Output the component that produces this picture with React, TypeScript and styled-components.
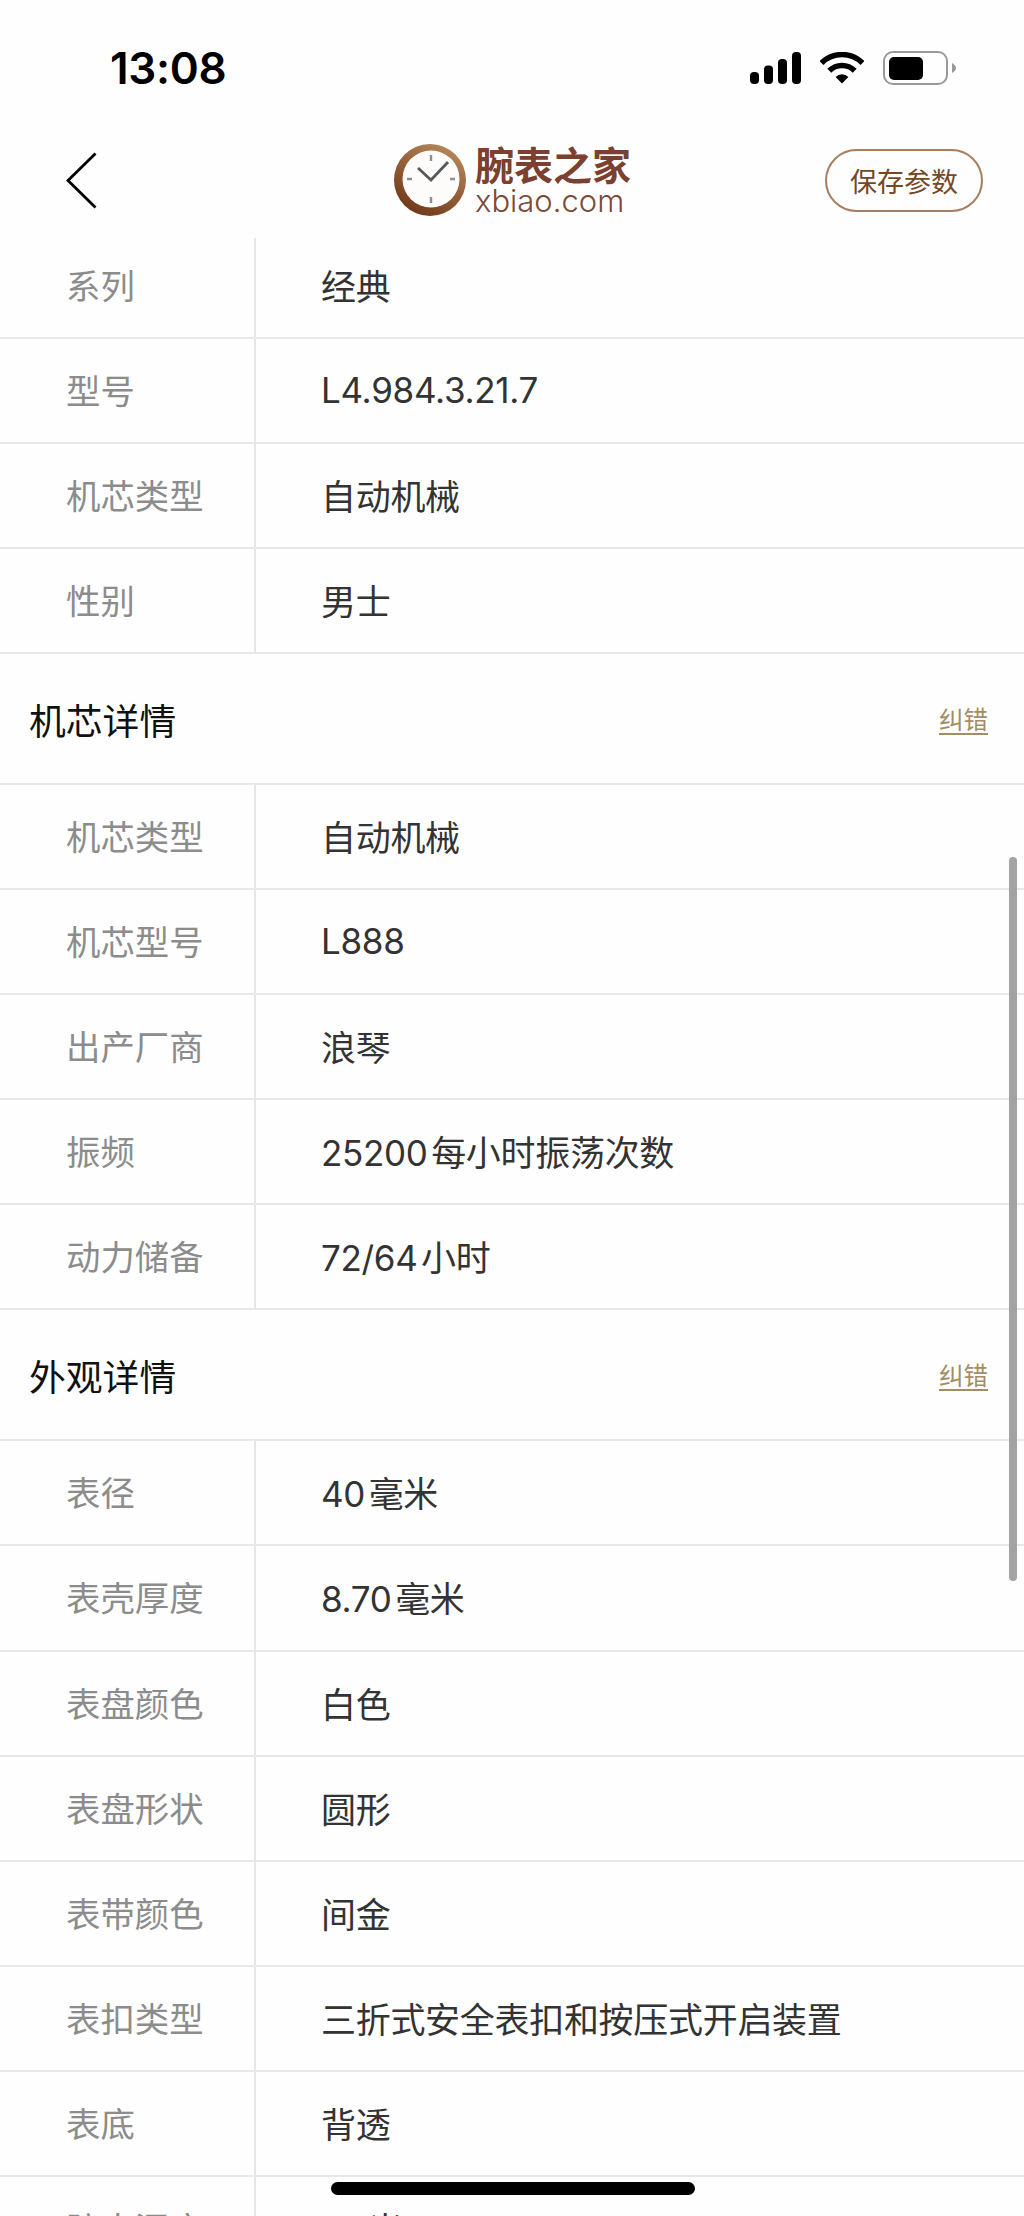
import styled, { createGlobalStyle } from "styled-components";

const GlobalStyle = createGlobalStyle`
  html, body {
    margin: 0;
    padding: 0;
    background: #fefefe;
  }
`;

type Spec = { label: string; value: string };

const basicSpecs: Spec[] = [
  { label: "系列", value: "经典" },
  { label: "型号", value: "L4.984.3.21.7" },
  { label: "机芯类型", value: "自动机械" },
  { label: "性别", value: "男士" },
];

const movementSpecs: Spec[] = [
  { label: "机芯类型", value: "自动机械" },
  { label: "机芯型号", value: "L888" },
  { label: "出产厂商", value: "浪琴" },
  { label: "振频", value: "25200 每小时振荡次数" },
  { label: "动力储备", value: "72/64 小时" },
];

const lookSpecs: Spec[] = [
  { label: "表径", value: "40 毫米" },
  { label: "表壳厚度", value: "8.70 毫米" },
  { label: "表盘颜色", value: "白色" },
  { label: "表盘形状", value: "圆形" },
  { label: "表带颜色", value: "间金" },
  { label: "表扣类型", value: "三折式安全表扣和按压式开启装置" },
  { label: "表底", value: "背透" },
  { label: "防水深度", value: "30 米" },
];

function SpecRows({ specs }: { specs: Spec[] }) {
  return (
    <>
      {specs.map((spec) => (
        <Row key={spec.label}>
          <Label>{spec.label}</Label>
          <Value>{spec.value}</Value>
        </Row>
      ))}
    </>
  );
}

function ClockLogo() {
  return (
    <svg width="72" height="72" viewBox="0 0 72 72">
      <defs>
        <linearGradient id="ring" x1="0.8" y1="0" x2="0.2" y2="1">
          <stop offset="0" stopColor="#b98a5e" />
          <stop offset="0.55" stopColor="#8f5a34" />
          <stop offset="1" stopColor="#6b3418" />
        </linearGradient>
      </defs>
      <circle cx="36" cy="36" r="36" fill="url(#ring)" />
      <circle cx="37" cy="35" r="28.5" fill="#fdfcfa" />
      <path d="M37 11v6M37 53v6M13 35h5M56 35h5" stroke="#8b8f92" strokeWidth="2.4" />
      <path d="M24 24l13 12 17-18" fill="none" stroke="#55595c" strokeWidth="2.8" />
    </svg>
  );
}

export default function App() {
  return (
    <Page>
      <GlobalStyle />
      <StatusBar>
        <Time>13:08</Time>
        <StatusIcons>
          <svg width="51" height="32" viewBox="0 0 51 32" fill="#000">
            <rect x="0" y="20" width="9" height="12" rx="4" />
            <rect x="14" y="13.5" width="9" height="18.5" rx="4" />
            <rect x="28" y="7" width="9" height="25" rx="4" />
            <rect x="42" y="0" width="9" height="32" rx="4" />
          </svg>
          <svg width="44" height="32" viewBox="0 0 44 32">
            <path
              d="M1.5 11A29 29 0 0 1 42.5 11M9.3 18.8A18 18 0 0 1 34.7 18.8"
              fill="none"
              stroke="#000"
              strokeWidth="5.5"
            />
            <path d="M22 31.5L15.6 25A9 9 0 0 1 28.4 25Z" fill="#000" />
          </svg>
          <svg width="73" height="34" viewBox="0 0 73 34">
            <rect x="1" y="1" width="63" height="32" rx="9" fill="none" stroke="#999" strokeWidth="2" />
            <rect x="6" y="6" width="34" height="23" rx="5" fill="#000" />
            <path d="M69 12c2 1 4 3 4 5s-2 4-4 5z" fill="#999" />
          </svg>
        </StatusIcons>
      </StatusBar>

      <NavBar>
        <BackButton>
          <svg width="31" height="57" viewBox="0 0 31 57">
            <path d="M29.5 1.5L2 28.5l27.5 27" fill="none" stroke="#000" strokeWidth="2.8" />
          </svg>
        </BackButton>
        <Logo>
          <ClockLogo />
          <LogoText>
            <LogoName>腕表之家</LogoName>
            <LogoUrl>xbiao.com</LogoUrl>
          </LogoText>
        </Logo>
        <SaveButton>保存参数</SaveButton>
      </NavBar>

      <ScrollArea>
        <ScrollContent>
          <SpecRows specs={basicSpecs} />
          <SectionHead>
            <SectionTitle>机芯详情</SectionTitle>
            <FixLink>纠错</FixLink>
          </SectionHead>
          <SpecRows specs={movementSpecs} />
          <SectionHead>
            <SectionTitle>外观详情</SectionTitle>
            <FixLink>纠错</FixLink>
          </SectionHead>
          <SpecRows specs={lookSpecs} />
        </ScrollContent>
      </ScrollArea>

      <ScrollThumb />
      <HomeIndicator />
    </Page>
  );
}

const Page = styled.div`
  position: relative;
  width: 1024px;
  height: 2216px;
  overflow: hidden;
  display: flex;
  flex-direction: column;
  background: #fefefe;
  font-family: "Liberation Sans", "Noto Sans CJK SC", sans-serif;
`;

const StatusBar = styled.div`
  height: 122px;
  box-sizing: border-box;
  padding: 46px 68px 0 110px;
  display: flex;
  justify-content: space-between;
  align-items: flex-start;
`;

const Time = styled.span`
  font-family: Inter, sans-serif;
  font-size: 44px;
  line-height: 44px;
  font-weight: 600;
  letter-spacing: -0.3px;
  color: #000;
`;

const StatusIcons = styled.div`
  display: flex;
  align-items: center;
  gap: 19px;
  padding-top: 5px;
`;

const NavBar = styled.div`
  height: 116px;
  box-sizing: border-box;
  padding: 0 41px 0 42px;
  display: grid;
  grid-template-columns: 1fr auto 1fr;
  align-items: center;
`;

const BackButton = styled.div`
  margin-left: 24px;
  display: flex;
`;

const Logo = styled.div`
  display: flex;
  align-items: center;
  gap: 9px;
`;

const LogoText = styled.div`
  display: flex;
  flex-direction: column;
  align-items: flex-start;
  padding-top: 2px;
`;

const LogoName = styled.span`
  font-size: 39px;
  line-height: 40px;
  font-weight: 700;
  color: #7b4030;
`;

const LogoUrl = styled.span`
  font-family: Inter, sans-serif;
  font-size: 31px;
  line-height: 28px;
  font-weight: 300;
  color: #7b4a36;
`;

const SaveButton = styled.div`
  justify-self: end;
  width: 158px;
  height: 63px;
  box-sizing: border-box;
  border: 2px solid #a57f60;
  border-radius: 32px;
  display: flex;
  align-items: center;
  justify-content: center;
  font-size: 27px;
  color: #74491f;
`;

const ScrollArea = styled.div`
  flex: 1;
  min-height: 0;
  overflow: hidden;
`;

const ScrollContent = styled.div`
  margin-top: -4px;
`;

const Row = styled.div`
  height: 105.05px;
  box-sizing: border-box;
  display: grid;
  grid-template-columns: 256px 1fr;
  border-bottom: 2px solid #e8e8e8;
`;

const Label = styled.div`
  padding: 0 0 3px 66px;
  display: flex;
  align-items: center;
  border-right: 2px solid #e6e6e6;
  font-size: 34.4px;
  color: #8c8c8c;
`;

const Value = styled.div`
  padding: 0 0 2px 65px;
  display: flex;
  align-items: center;
  font-family: Inter, "Noto Sans CJK SC", sans-serif;
  font-size: 35px;
  letter-spacing: -0.3px;
  word-spacing: -6px;
  color: #333;
`;

const SectionHead = styled.div`
  height: 131px;
  box-sizing: border-box;
  padding: 0 36px 0 29px;
  display: flex;
  align-items: center;
  justify-content: space-between;
  border-bottom: 2px solid #e8e8e8;
`;

const SectionTitle = styled.span`
  font-size: 36.8px;
  color: #111;
`;

const FixLink = styled.span`
  font-size: 24.5px;
  color: #a38c66;
  text-decoration: underline;
  text-underline-offset: 4px;
`;

const ScrollThumb = styled.div`
  position: absolute;
  top: 857px;
  left: 1009px;
  width: 8px;
  height: 724px;
  border-radius: 4px;
  background: #a3a3a3;
`;

const HomeIndicator = styled.div`
  position: absolute;
  top: 2182px;
  left: 331px;
  width: 364px;
  height: 13px;
  border-radius: 7px;
  background: #000;
`;
